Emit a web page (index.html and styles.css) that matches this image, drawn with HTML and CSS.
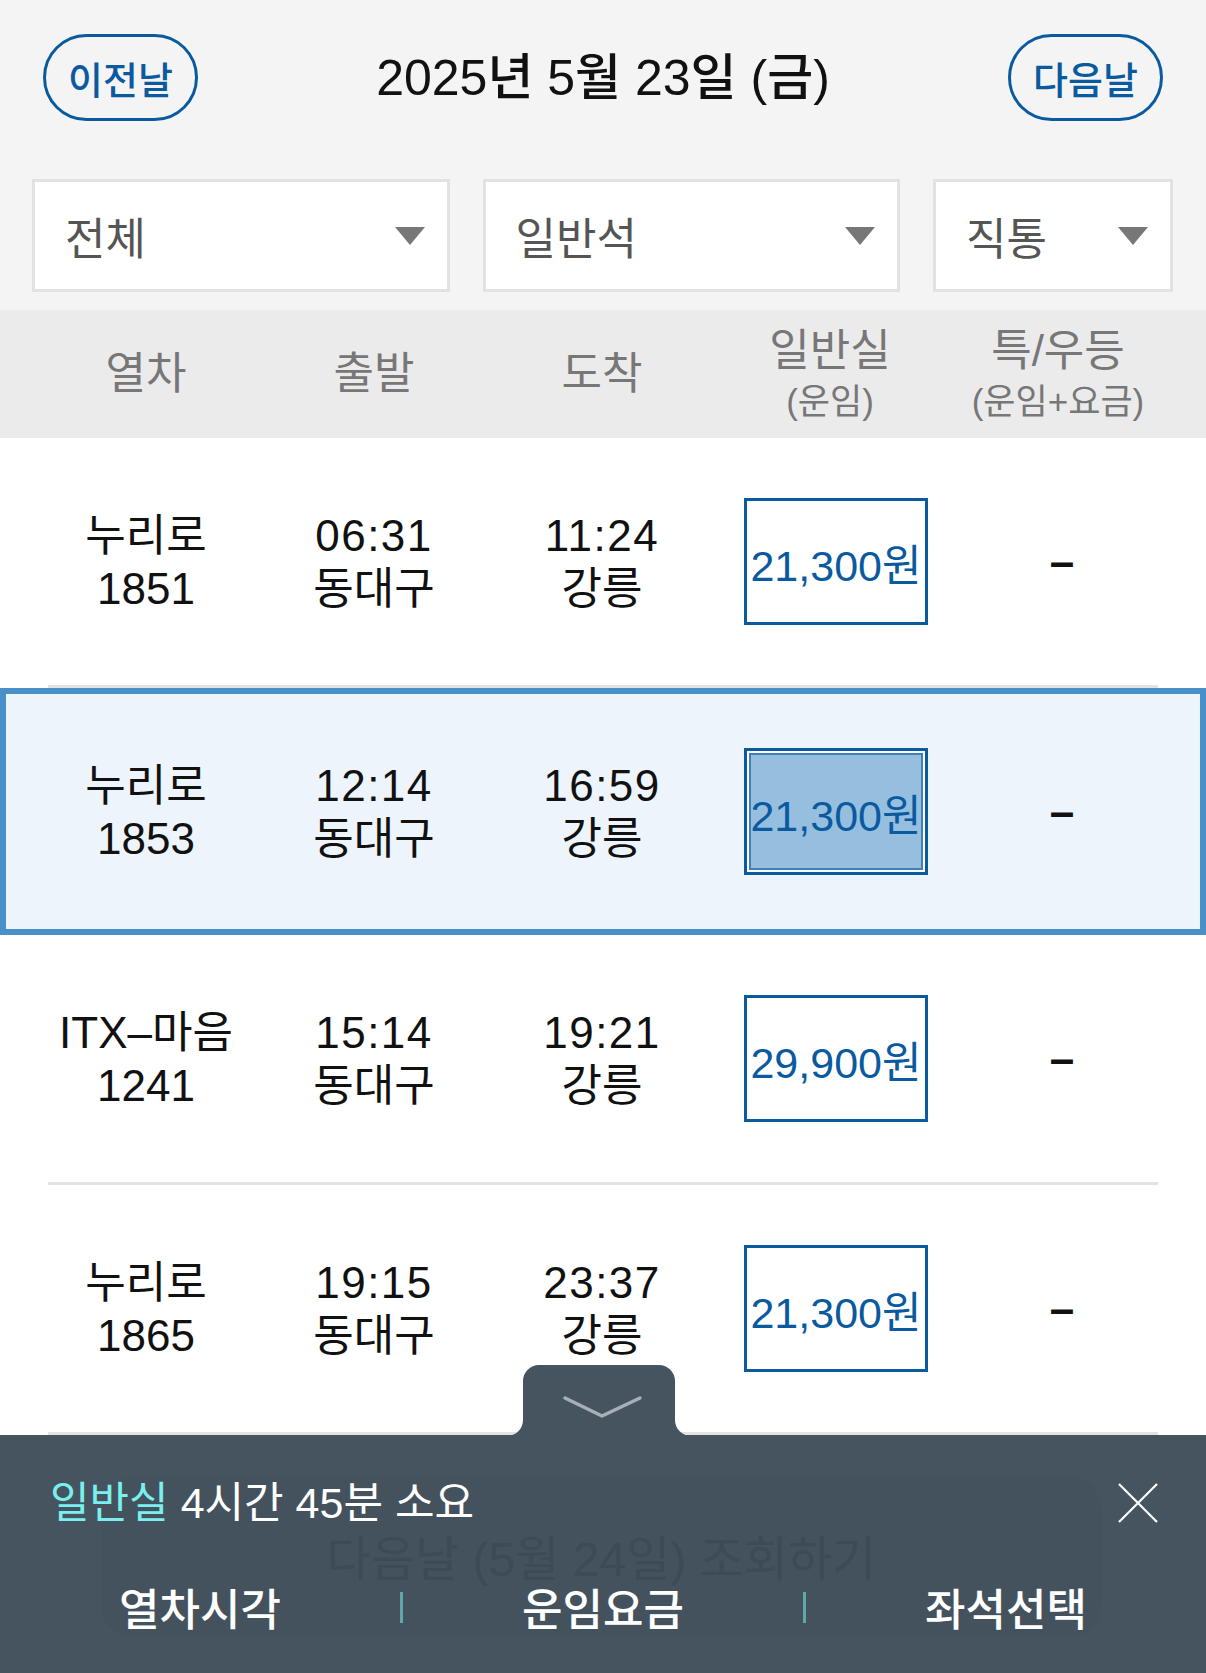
FILE: index.html
```html
<!DOCTYPE html>
<html lang="ko">

<head>
    <meta charset="UTF-8">
    <meta name="viewport" content="width=device-width, initial-scale=1.0">
    <title>열차 조회</title>
    <link rel="stylesheet" href="styles.css">
</head>

<body>
    <div class="top-area">
        <div class="date-bar">
            <button class="day-button">이전날</button>
            <div class="date-title">2025년 5월 23일 (금)</div>
            <button class="day-button">다음날</button>
        </div>
        <div class="filter-bar">
            <div class="filter-box"><span>전체</span><i class="arrow"></i></div>
            <div class="filter-box"><span>일반석</span><i class="arrow"></i></div>
            <div class="filter-box"><span>직통</span><i class="arrow"></i></div>
        </div>
    </div>

    <div class="table-head">
        <div class="head-cell">열차</div>
        <div class="head-cell">출발</div>
        <div class="head-cell">도착</div>
        <div class="head-cell">일반실<span class="head-sub">(운임)</span></div>
        <div class="head-cell">특/우등<span class="head-sub">(운임+요금)</span></div>
    </div>

    <div class="train-list">
        <div class="train-row">
            <div class="cell">누리로<br>1851</div>
            <div class="cell"><span class="time">06:31</span><br>동대구</div>
            <div class="cell"><span class="time">11:24</span><br>강릉</div>
            <button class="price-box">21,300원</button>
            <div class="cell dash">–</div>
        </div>
        <hr class="border-line" />
        <div class="train-row selected">
            <div class="cell">누리로<br>1853</div>
            <div class="cell"><span class="time">12:14</span><br>동대구</div>
            <div class="cell"><span class="time">16:59</span><br>강릉</div>
            <button class="price-box active">21,300원</button>
            <div class="cell dash">–</div>
        </div>
        <div class="train-row">
            <div class="cell">ITX–마음<br>1241</div>
            <div class="cell"><span class="time">15:14</span><br>동대구</div>
            <div class="cell"><span class="time">19:21</span><br>강릉</div>
            <button class="price-box">29,900원</button>
            <div class="cell dash">–</div>
        </div>
        <hr class="border-line" />
        <div class="train-row">
            <div class="cell">누리로<br>1865</div>
            <div class="cell"><span class="time">19:15</span><br>동대구</div>
            <div class="cell"><span class="time">23:37</span><br>강릉</div>
            <button class="price-box">21,300원</button>
            <div class="cell dash">–</div>
        </div>
        <hr class="border-line" />
    </div>

    <div class="bottom-sheet">
        <!-- 접기 탭 -->
        <svg class="sheet-tab" width="184" height="71" viewBox="0 0 184 71">
            <path d="M0 71 A16 16 0 0 0 16 55 V16 A16 16 0 0 1 32 0 H152 A16 16 0 0 1 168 16 V55 A16 16 0 0 0 184 71 Z" fill="#465460" />
            <path d="M58 33 L95 51 L133 33" fill="none" stroke="#a7afb7" stroke-width="3.5" stroke-linecap="round" stroke-linejoin="round" />
        </svg>
        <!-- 시트 뒤로 비치는 버튼 -->
        <div class="ghost-box">다음날 (5월 24일) 조회하기</div>

        <div class="sheet-info">
            <div class="sheet-text"><span class="seat-name">일반실</span> 4시간 45분 소요</div>
            <svg class="close-icon" width="40" height="40" viewBox="0 0 40 40">
                <path d="M1 1 L39 39 M39 1 L1 39" stroke="#ffffff" stroke-width="2.2" fill="none" />
            </svg>
        </div>
        <div class="sheet-tabs">
            <button class="sheet-tab-button">열차시각</button>
            <span class="tab-sep"></span>
            <button class="sheet-tab-button">운임요금</button>
            <span class="tab-sep"></span>
            <button class="sheet-tab-button">좌석선택</button>
        </div>
    </div>
</body>

</html>
```

FILE: styles.css
```css
body {
    margin: 0;
    background-color: white;
    font-family: "Liberation Sans", "Noto Sans CJK KR", sans-serif;
    color: #111;
}

button {
    font-family: inherit;
    background: none;
    border: none;
    padding: 0;
}

.top-area {
    background-color: #f4f4f4;
    padding-bottom: 18px;
}

.date-bar {
    display: flex;
    justify-content: space-between;
    align-items: center;
    padding: 34px 43px 0 43px;
}

.day-button {
    width: 155px;
    height: 87px;
    border: 3px solid #0a5aa0;
    border-radius: 45px;
    color: #0a5aa0;
    font-size: 38px;
    font-weight: 500;
}

.date-title {
    font-size: 50px;
    font-weight: 500;
    color: #111;
    margin-bottom: 10px;
}

.filter-bar {
    display: grid;
    grid-template-columns: 1fr 1fr 240px;
    gap: 33px;
    padding: 0 33px 0 32px;
    margin-top: 58px;
}

.filter-box {
    height: 113px;
    box-sizing: border-box;
    background-color: white;
    border: 3px solid #e2e2e2;
    display: flex;
    align-items: center;
    justify-content: space-between;
    padding: 0 22px 0 30px;
    font-size: 44px;
    color: #555;
}

.arrow {
    width: 0;
    height: 0;
    border-left: 15px solid transparent;
    border-right: 15px solid transparent;
    border-top: 18px solid #777;
}

.table-head {
    display: grid;
    grid-template-columns: repeat(5, 228px);
    padding-left: 32px;
    height: 128px;
    background-color: #ebebeb;
    align-items: center;
}

.head-cell {
    display: flex;
    flex-direction: column;
    align-items: center;
    font-size: 44px;
    line-height: 50px;
    color: #777;
}

.head-sub {
    font-size: 35px;
    line-height: 40px;
    margin-top: 6px;
}

.train-row {
    display: grid;
    grid-template-columns: repeat(5, 228px);
    padding-left: 32px;
    height: 247px;
    box-sizing: border-box;
    align-items: center;
}

.train-row.selected {
    border: 6px solid #4a90c8;
    padding-left: 26px;
    background-color: #eef4fb;
}

.cell {
    text-align: center;
    font-size: 44px;
    line-height: 53px;
    color: #111;
}

.time {
    letter-spacing: 1.5px;
}

.dash {
    font-size: 44px;
    font-weight: bold;
    padding-left: 8px;
}

.price-box {
    justify-self: center;
    margin-left: 12px;
    width: 184px;
    height: 127px;
    box-sizing: border-box;
    border: 3px solid #0a5aa0;
    background-color: white;
    color: #0a5aa0;
    font-size: 43px;
    white-space: nowrap;
    display: flex;
    align-items: center;
    justify-content: center;
}

.price-box.active {
    background-color: #96bfdf;
    box-shadow: inset 0 0 0 2px #ffffff, inset 0 0 0 4px #3f7fbb;
}

.border-line {
    margin: 0 48px;
    border: none;
    height: 3px;
    background-color: #e3e3e3;
}

.bottom-sheet {
    position: relative;
    height: 238px;
    background-color: #465460;
}

.sheet-tab {
    position: absolute;
    left: 507px;
    top: -70px;
}

.ghost-box {
    position: absolute;
    left: 101px;
    top: 42px;
    width: 1001px;
    height: 160px;
    box-sizing: border-box;
    border-radius: 32px;
    background-color: rgba(0, 0, 0, 0.018);
    text-align: center;
    padding-top: 58px;
    font-size: 48px;
    line-height: 50px;
    color: #3e4a56;
}

.sheet-info {
    position: relative;
    display: flex;
    justify-content: space-between;
    align-items: center;
    padding: 43px 48px 0 50px;
    height: 50px;
}

.sheet-text {
    font-size: 43px;
    line-height: 50px;
    color: white;
}

.seat-name {
    color: #7af0ee;
}

.sheet-tabs {
    position: relative;
    display: flex;
    align-items: center;
    margin-top: 58px;
}

.sheet-tab-button {
    flex: 1;
    font-size: 44px;
    line-height: 50px;
    font-weight: 500;
    color: white;
}

.tab-sep {
    width: 3px;
    height: 31px;
    margin-top: -8px;
    background-color: #5ea7ab;
}
```
